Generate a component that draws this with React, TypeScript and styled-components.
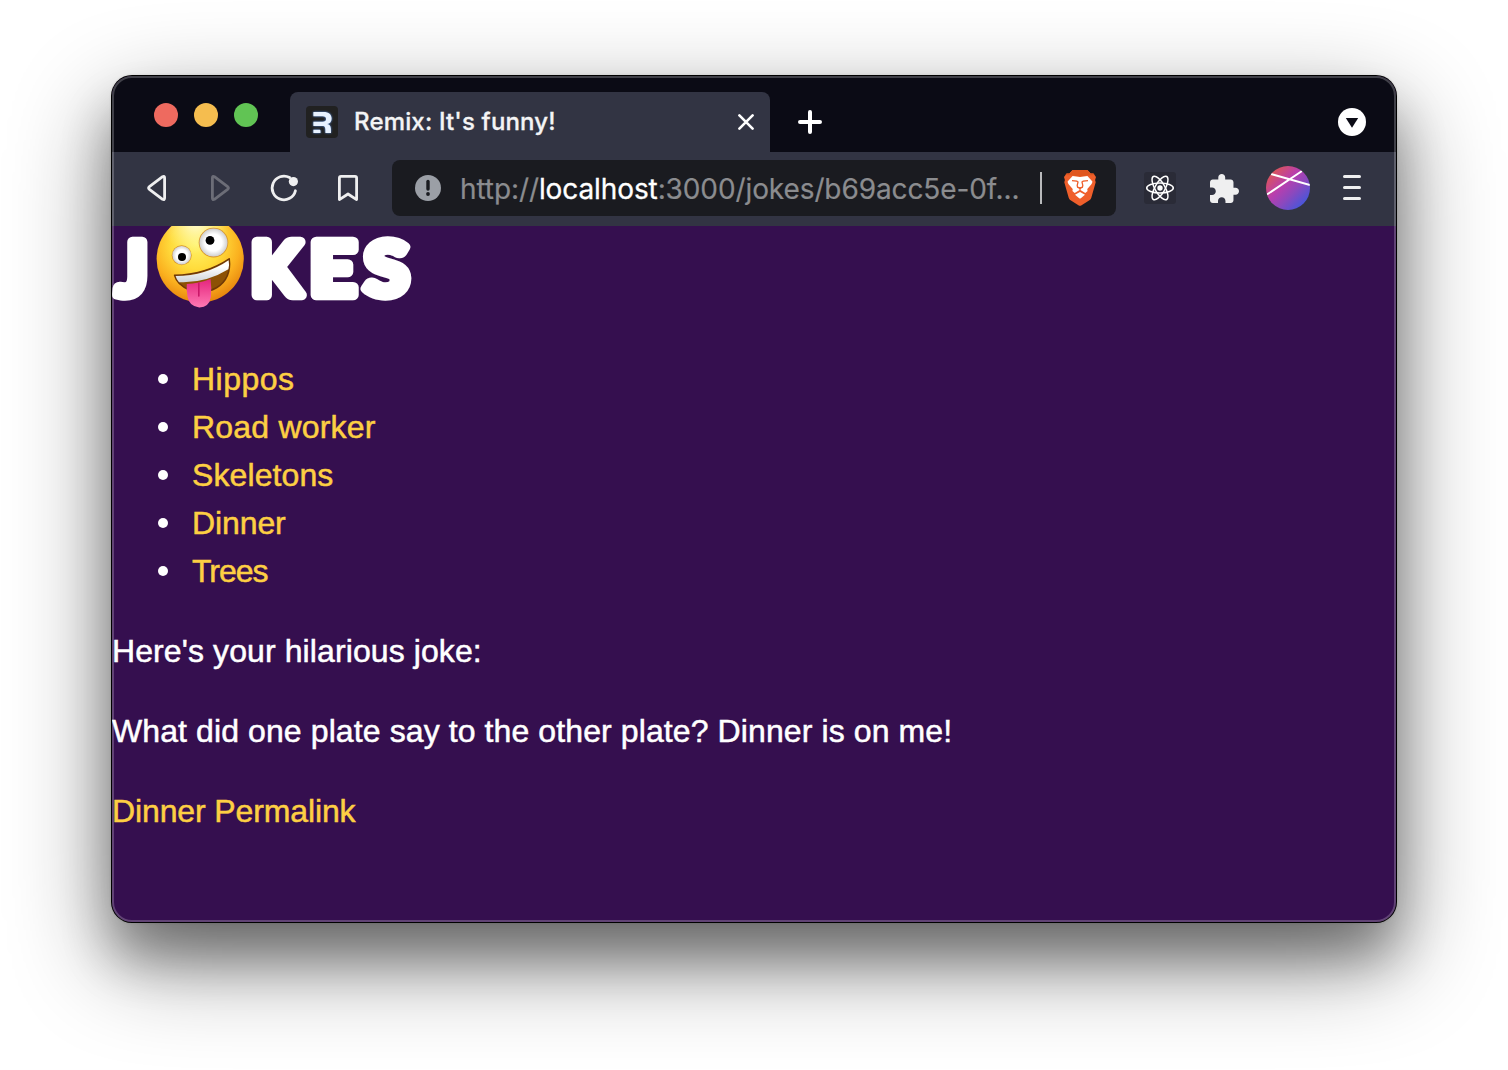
import React from "react";
import styled, { createGlobalStyle } from "styled-components";
import { SiRemix } from "react-icons/si";

const GlobalStyle = createGlobalStyle`
  * { box-sizing: border-box; }
  html, body { margin: 0; padding: 0; background: #fff; overflow: hidden; }
`;

const Desktop = styled.main`
  width: 1508px;
  height: 1070px;
  padding: 76px 112px 148px;
  background: #fff;
  overflow: hidden;
`;

const BrowserWindow = styled.div`
  position: relative;
  display: flex;
  flex-direction: column;
  height: 846px;
  border-radius: 20px;
  background: #350f4f;
  box-shadow: 0 0 0 1px #000, 0 0 3px rgba(0, 0, 0, 0.3), 0 36px 100px rgba(0, 0, 0, 0.48),
    0 36px 50px rgba(0, 0, 0, 0.3);

  &::after {
    content: "";
    position: absolute;
    inset: 0;
    border-radius: 20px;
    border: 2px solid rgba(255, 255, 255, 0.22);
    pointer-events: none;
  }
`;

const TabStrip = styled.header`
  display: flex;
  align-items: flex-end;
  height: 76px;
  flex: none;
  padding: 0 30px 0 42px;
  background: #0b0b15;
  border-radius: 20px 20px 0 0;
`;

const TrafficLights = styled.div`
  display: flex;
  gap: 16px;
  width: 136px;
  margin-bottom: 25px;
`;

const Light = styled.span<{ $color: string }>`
  width: 24px;
  height: 24px;
  border-radius: 50%;
  background: ${(p) => p.$color};
`;

const Tab = styled.div`
  display: flex;
  align-items: center;
  width: 480px;
  height: 60px;
  padding: 0 16px;
  border-radius: 8px 8px 0 0;
  background: #323443;
`;

const Favicon = styled.span`
  display: grid;
  place-items: center;
  width: 32px;
  height: 32px;
  border-radius: 4px;
  background: #212121;
  color: #e8f2ff;

  svg {
    filter: drop-shadow(0 0 1px #5b8fe0);
  }
`;

const TabTitle = styled.span`
  flex: 1;
  margin-left: 16px;
  font: 500 24px/32px Inter, sans-serif;
  letter-spacing: 0.17px;
  color: #f4f4f5;
  -webkit-text-stroke: 0.3px #f4f4f5;
  white-space: nowrap;
`;

const NewTab = styled.span`
  display: flex;
  flex: 1;
  margin: 0 0 18px 28px;
`;

const TabSearch = styled.span`
  display: flex;
  margin-bottom: 16px;
`;

const Toolbar = styled.nav`
  display: flex;
  flex: none;
  height: 74px;
  padding: 8px 12px 10px;
  background: #323443;
`;

const Slot = styled.span`
  display: grid;
  place-items: center;
  width: 64px;
  height: 56px;
`;

const AddressBar = styled.div`
  display: flex;
  align-items: center;
  flex: 1;
  min-width: 0;
  height: 56px;
  margin: 0 12px;
  padding: 0 20px 0 23px;
  border-radius: 8px;
  background: #1a1b20;
`;

const Url = styled.span`
  flex: 1;
  margin-left: 19px;
  padding-top: 1px;
  font: 400 28px/36px Inter, sans-serif;
  letter-spacing: -0.1px;
  color: #8b8c8f;
  -webkit-text-stroke: 0.2px #8b8c8f;
  white-space: nowrap;
`;

const Host = styled.span`
  color: #fff;
  -webkit-text-stroke: 0.3px #fff;
`;

const Divider = styled.span`
  width: 2px;
  height: 32px;
  margin-right: 22px;
  background: #b9babc;
`;

const ExtensionTile = styled.span`
  display: grid;
  place-items: center;
  width: 32px;
  height: 32px;
  border-radius: 3px;
  background: #2a2b37;
`;

const Page = styled.section`
  flex: 1;
  overflow: hidden;
  border-radius: 0 0 20px 20px;
  font: 400 32px/48px "Liberation Sans", Arial, sans-serif;
  color: #fff;
`;

const Logo = styled.svg`
  display: block;
  width: 310px;
  height: 97px;
`;

const JokeList = styled.ul`
  margin: 32px 0;
  padding-left: 46px;
  list-style: none;
`;

const JokeItem = styled.li`
  display: flex;
  align-items: center;
  gap: 24px;

  &::before {
    content: "";
    width: 10px;
    height: 10px;
    border-radius: 50%;
    background: #fff;
  }
`;

const Link = styled.a<{ $spacing: number }>`
  color: #fdcf43;
  letter-spacing: ${(p) => p.$spacing}px;
  -webkit-text-stroke: 0.5px #fdcf43;
`;

const Paragraph = styled.p`
  margin: 0 0 32px;
  letter-spacing: 0.1px;
  -webkit-text-stroke: 0.5px currentColor;
`;

const jokes = [
  { name: "Hippos", spacing: 0.5 },
  { name: "Road worker", spacing: 0.2 },
  { name: "Skeletons", spacing: 0.1 },
  { name: "Dinner", spacing: -0.1 },
  { name: "Trees", spacing: -1 },
];

const line = {
  width: 32,
  height: 32,
  viewBox: "0 0 32 32",
  fill: "none",
  stroke: "#efeff0",
  strokeWidth: 2.8,
  strokeLinecap: "round" as const,
  strokeLinejoin: "round" as const,
};

const BackIcon = () => (
  <svg {...line}>
    <path d="M22.6 4.7 9.4 14.7Q7.7 16 9.4 17.3L22.6 27.3Q24.6 28.3 24.6 26V6Q24.6 3.7 22.6 4.7Z" />
  </svg>
);

const ForwardIcon = () => (
  <svg {...line} stroke="#6c6d77">
    <path d="M10.4 4.7 23.6 14.7Q25.3 16 23.6 17.3L10.4 27.3Q8.4 28.3 8.4 26V6Q8.4 3.7 10.4 4.7Z" />
  </svg>
);

const ReloadIcon = () => (
  <svg {...line}>
    <path d="M21.6 5.6A11.8 11.8 0 1 0 27.4 18.8" />
    <circle cx="25.4" cy="9.6" r="4.6" fill="#efeff0" stroke="none" />
  </svg>
);

const BookmarkIcon = () => (
  <svg {...line}>
    <path d="M7.4 6Q7.4 4.4 9 4.4H23Q24.6 4.4 24.6 6V27.6L16 22 7.4 27.6Z" />
  </svg>
);

const InfoIcon = () => (
  <svg width="26" height="26" viewBox="0 0 26 26">
    <circle cx="13" cy="13" r="13" fill="#9b9fa6" />
    <path d="M13 6.5V14" stroke="#1a1b20" strokeWidth="3.4" strokeLinecap="round" />
    <circle cx="13" cy="19" r="1.9" fill="#1a1b20" />
  </svg>
);

const LionIcon = () => (
  <svg width="32" height="36" viewBox="0 0 32 36">
    <path
      d="M8.6 0H23.4L26.7 3.4 29.4 3.5 32 7 31.1 9.9 31.7 12.3 27.3 27.8Q26.8 29.4 25.4 30.3L17.2 35.4Q16 36.2 14.8 35.4L6.6 30.3Q5.2 29.4 4.7 27.8L.3 12.3.9 9.9 0 7 2.6 3.5 5.3 3.4Z"
      fill="#ef5f2b"
    />
    <path d="M8.6 0H23.4L26.7 3.4 29.4 3.5 30.5 5 22.5 5.4 16 6.8 9.5 5.4 1.5 5 2.6 3.5 5.3 3.4Z" fill="#e0561f" />
    <path
      d="M8.6 5.9 16 7 23.4 5.9 28.4 11.5Q28.4 13.2 27.2 14.5L23.5 18.8Q23 19.8 23.6 21L21.3 23.1 16.8 20.3H15.2L10.7 23.1 8.4 21Q9 19.8 8.5 18.8L4.8 14.5Q3.6 13.2 3.6 11.5Z"
      fill="#fff"
    />
    <path d="M16 22.1 21 24.7 16.8 28.2Q16 28.8 15.2 28.2L11 24.7Z" fill="#fff" />
    <path
      d="M8 10.6 12.8 11.2 14 12 13.2 15.4 13.6 17.2 16 18.2 18.4 17.2 18.8 15.4 18 12 19.2 11.2 24 10.6"
      fill="none"
      stroke="#ef5f2b"
      strokeWidth="1.3"
    />
    <path d="M13.7 17.3H18.3L16 19.2Z" fill="#ef5f2b" />
    <path d="M16 18.5V21.4" stroke="#ef5f2b" strokeWidth="1.2" />
  </svg>
);

const AtomIcon = () => (
  <svg width="30" height="28" viewBox="-15 -14 30 28" fill="none" stroke="#fff" strokeWidth="1.5">
    <circle r="2.7" fill="#fff" stroke="none" />
    <ellipse rx="13.3" ry="5" />
    <ellipse rx="13.3" ry="5" transform="rotate(60)" />
    <ellipse rx="13.3" ry="5" transform="rotate(120)" />
  </svg>
);

const PuzzleIcon = () => (
  <svg width="29" height="29" viewBox="2 1 21 21" fill="#efeff0">
    <path d="M20.5 11H19V7c0-1.1-.9-2-2-2h-4V3.5C13 2.12 11.88 1 10.5 1S8 2.12 8 3.5V5H4c-1.1 0-1.99.9-1.99 2v3.8H3.5c1.49 0 2.7 1.21 2.7 2.7s-1.21 2.7-2.7 2.7H2V20c0 1.1.9 2 2 2h3.8v-1.5c0-1.49 1.21-2.7 2.7-2.7s2.7 1.21 2.7 2.7V22H17c1.1 0 2-.9 2-2v-4h1.5c1.38 0 2.5-1.12 2.5-2.5S21.88 11 20.5 11z" />
  </svg>
);

const Avatar = () => (
  <svg width="44" height="44" viewBox="0 0 44 44">
    <defs>
      <linearGradient id="avatar" x1="0.1" y1="0.1" x2="0.88" y2="0.88">
        <stop offset="0" stopColor="#e0574f" />
        <stop offset="0.4" stopColor="#b83eae" />
        <stop offset="0.65" stopColor="#8d48bd" />
        <stop offset="1" stopColor="#4257dc" />
      </linearGradient>
      <clipPath id="avatarClip">
        <circle cx="22" cy="22" r="22" />
      </clipPath>
    </defs>
    <g clipPath="url(#avatarClip)">
      <rect width="44" height="44" fill="url(#avatar)" />
      <path d="M5 8 44 19M1 28.5 36 5" stroke="#fff" strokeWidth="2" />
    </g>
  </svg>
);

const MenuIcon = () => (
  <svg {...line} strokeWidth="3">
    <path d="M8.5 4.5h15M8.5 15.5h15M8.5 26.5h15" />
  </svg>
);

const JokesLogo = () => (
  <Logo viewBox="0 0 310 97">
    <defs>
      <radialGradient id="face" gradientUnits="userSpaceOnUse" cx="84" cy="18" r="62">
        <stop offset="0" stopColor="#fff36a" />
        <stop offset="0.4" stopColor="#ffdc3c" />
        <stop offset="0.7" stopColor="#fbb11f" />
        <stop offset="1" stopColor="#e37c0a" />
      </radialGradient>
      <radialGradient id="shine" gradientUnits="userSpaceOnUse" cx="84" cy="-6" r="34">
        <stop offset="0" stopColor="#ffffe8" />
        <stop offset="1" stopColor="#fff9a0" stopOpacity="0" />
      </radialGradient>
      <radialGradient id="eye">
        <stop offset="0.6" stopColor="#fff" />
        <stop offset="1" stopColor="#cfcfcf" />
      </radialGradient>
      <linearGradient id="teeth" x1="0" y1="0" x2="0" y2="1">
        <stop offset="0.3" stopColor="#fff" />
        <stop offset="1" stopColor="#cfd3d8" />
      </linearGradient>
      <linearGradient id="tongue" x1="0" y1="0" x2="0" y2="1">
        <stop offset="0" stopColor="#e5257d" />
        <stop offset="1" stopColor="#ff79b4" />
      </linearGradient>
    </defs>
    <g
      fill="#fff"
      stroke="#fff"
      strokeWidth="10.4"
      strokeLinejoin="round"
      fontFamily="Lato, sans-serif"
      fontWeight="700"
      fontSize="72"
    >
      <text x="4.5" y="69" textLength="31" lengthAdjust="spacingAndGlyphs">J</text>
      <text x="139" y="69" textLength="50" lengthAdjust="spacingAndGlyphs">K</text>
      <text x="198" y="69" textLength="46" lengthAdjust="spacingAndGlyphs">E</text>
      <text x="252.5" y="69" textLength="44" lengthAdjust="spacingAndGlyphs">S</text>
    </g>
    <circle cx="88.2" cy="33" r="43.6" fill="url(#face)" />
    <circle cx="88.2" cy="33" r="43.6" fill="url(#shine)" />
    <circle cx="101.5" cy="16.6" r="14.8" fill="#d9952a" />
    <circle cx="101.5" cy="16.6" r="14" fill="url(#eye)" />
    <circle cx="98" cy="14.4" r="4.4" />
    <circle cx="69.7" cy="29.2" r="10" fill="#d9952a" />
    <circle cx="69.7" cy="29.2" r="9.3" fill="url(#eye)" />
    <circle cx="70" cy="31" r="4" />
    <path
      d="M62.6 49.4Q94 48.5 117.2 32.8 119.6 52.5 104.5 61.8 92 68.8 78 64.2 65 59 62.6 49.4Z"
      fill="#8d5105"
      stroke="#6f3806"
      strokeWidth="1.6"
      strokeLinejoin="round"
    />
    <path d="M63.6 50.1Q94.5 49.5 116.6 34.2 117.6 38.5 116.4 43.3 93.5 57.5 67 56.2 64.4 53.4 63.6 50.1Z" fill="url(#teeth)" />
    <path
      d="M74.8 58Q87 57.3 98.6 53 99.8 62 98.9 71 97 81.5 87.3 81.4 77.4 80.6 75.6 71 74.2 64 74.8 58Z"
      fill="url(#tongue)"
    />
    <path d="M86.8 57V70" stroke="#c91768" strokeWidth="1.6" strokeLinecap="round" />
  </Logo>
);

export default function App() {
  return (
    <>
      <GlobalStyle />
      <Desktop>
        <BrowserWindow>
          <TabStrip>
            <TrafficLights>
              <Light $color="#ee6a5f" />
              <Light $color="#f5bd4f" />
              <Light $color="#61c454" />
            </TrafficLights>
            <Tab>
              <Favicon>
                <SiRemix size={21} />
              </Favicon>
              <TabTitle>Remix: It's funny!</TabTitle>
              <svg width="16" height="16" viewBox="0 0 16 16" stroke="#fff" strokeWidth="2.6" strokeLinecap="round">
                <path d="M1.4 1.4 14.6 14.6M14.6 1.4 1.4 14.6" />
              </svg>
            </Tab>
            <NewTab>
              <svg width="24" height="24" viewBox="0 0 24 24" stroke="#fff" strokeWidth="4" strokeLinecap="round">
                <path d="M12 2V22M2 12H22" />
              </svg>
            </NewTab>
            <TabSearch>
              <svg width="28" height="28" viewBox="0 0 28 28">
                <circle cx="14" cy="14" r="14" fill="#fff" />
                <path d="M7.8 10H20.2L14 19.8Z" fill="#0b0b15" />
              </svg>
            </TabSearch>
          </TabStrip>
          <Toolbar>
            <Slot><BackIcon /></Slot>
            <Slot><ForwardIcon /></Slot>
            <Slot><ReloadIcon /></Slot>
            <Slot><BookmarkIcon /></Slot>
            <AddressBar>
              <InfoIcon />
              <Url>
                http://<Host>localhost</Host>:3000/jokes/b69acc5e-0f...
              </Url>
              <Divider />
              <LionIcon />
            </AddressBar>
            <Slot>
              <ExtensionTile><AtomIcon /></ExtensionTile>
            </Slot>
            <Slot><PuzzleIcon /></Slot>
            <Slot><Avatar /></Slot>
            <Slot><MenuIcon /></Slot>
          </Toolbar>
          <Page>
            <JokesLogo />
            <JokeList>
              {jokes.map((j) => (
                <JokeItem key={j.name}>
                  <Link $spacing={j.spacing}>{j.name}</Link>
                </JokeItem>
              ))}
            </JokeList>
            <Paragraph>Here's your hilarious joke:</Paragraph>
            <Paragraph>What did one plate say to the other plate? Dinner is on me!</Paragraph>
            <Link $spacing={-0.12}>Dinner Permalink</Link>
          </Page>
        </BrowserWindow>
      </Desktop>
    </>
  );
}
